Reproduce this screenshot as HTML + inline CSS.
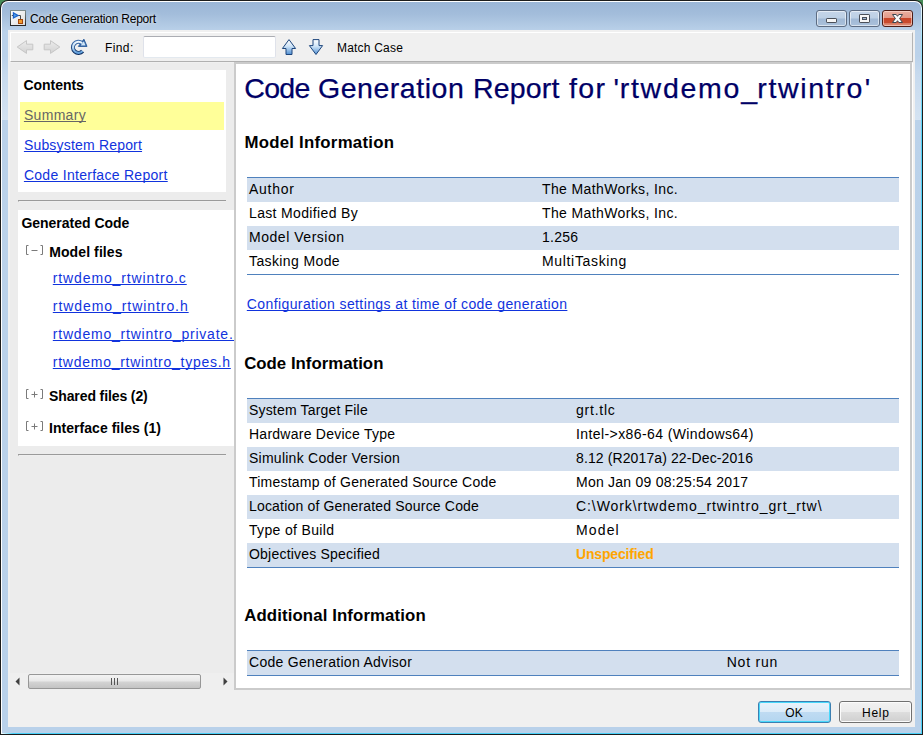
<!DOCTYPE html>
<html>
<head>
<meta charset="utf-8">
<title>Code Generation Report</title>
<style>
*{box-sizing:border-box;margin:0;padding:0}
html,body{width:923px;height:735px;overflow:hidden;background:#468c58}
body{font-family:"Liberation Sans",sans-serif;font-size:14px;color:#000;position:relative}
.abs{position:absolute}
.t{position:absolute;white-space:nowrap;line-height:1;transform-origin:0 0;text-decoration-skip-ink:none}
#frame{left:0;top:0;width:923px;height:735px;background:#1c1c1c;border-radius:8px 8px 0 0;overflow:hidden}
#frame2{left:1px;top:1px;width:921px;height:733px;border-radius:7px 7px 0 0;background:linear-gradient(90deg,#fff 0,#fff 50%,transparent 50%),linear-gradient(#fff 0,#e8f8ff 8px,#9fe2fb 40px,#4fd2f8 140px,#48d0f8 100%)}
#frame2b{left:1px;top:733px;width:921px;height:1px;background:linear-gradient(90deg,#fff 0,#48d0f8 12px,#48d0f8 100%)}
#frame3{left:2px;top:2px;width:919px;height:731px;border-radius:6px 6px 0 0;
 background:linear-gradient(#9bb6d7 0px,#a3bddb 12px,#bbd2ea 30px,#b9d1ea 100%)}
#client{left:8px;top:30px;width:907px;height:697px;background:#f0f0f0}
#toolbar{left:10px;top:32px;width:903px;height:30px;background:#f0f0f0;border-top:1px solid #fff;border-left:1px solid #fff;border-right:1px solid #b4b4b4;border-bottom:1px solid #b0b0b0}
#leftpane{left:10px;top:63px;width:224px;height:627px;background:#ececec;overflow:hidden}
#rightpane{left:234px;top:62px;width:678px;height:628px;background:#fff;border:2px solid #cbcbcb;overflow:hidden}
.wp{position:absolute;background:#fff}
.hr{position:absolute;height:2px;border-top:1px solid #9a9a9a;border-left:1px solid #9a9a9a;border-bottom:1px solid #efefef;left:8px;width:208px}
a,.lnk{color:#0000ee;text-decoration:underline}
.b{font-weight:bold}
.row{position:absolute;left:247px;width:652px;height:24px}
.sh{background:#d3dfee}
.bl{position:absolute;left:247px;width:652px;height:1px;background:#4f81bd}
.wb{top:10px;width:31px;height:17px;border:1px solid #5d6c82;border-radius:3px;box-shadow:inset 0 0 0 1px rgba(255,255,255,.55);background:linear-gradient(#c5d5e8 0,#bdd0e5 47%,#a1b9d5 53%,#aac1db 100%)}
.wc{border-color:#4d1c16;background:linear-gradient(#eab0a2 0,#e39a8a 45%,#c8462a 50%,#c84b2e 78%,#da8068 84%,#dc8a74 100%);box-shadow:inset 0 0 0 1px rgba(255,225,215,.6)}
.btn{position:absolute;width:73px;height:22px;border-radius:3px;top:701px}
</style>
</head>
<body>
<div id="frame" class="abs"></div>
<div id="frame2" class="abs"></div>
<div id="frame2b" class="abs"></div>
<div id="frame3" class="abs"></div>
<div class="abs" style="left:2px;top:56px;width:6px;height:64px;background:linear-gradient(rgba(255,255,255,0) 0,rgba(255,255,255,.18) 30%,rgba(255,255,255,.38) 100%)"></div>
<div class="abs" style="left:915px;top:56px;width:6px;height:64px;background:linear-gradient(rgba(255,255,255,0) 0,rgba(255,255,255,.18) 30%,rgba(255,255,255,.38) 100%)"></div>
<div id="client" class="abs"></div>
<div id="toolbar" class="abs"></div>

<!-- title -->

<!-- toolbar text -->
<div class="abs" id="findbox" style="left:143px;top:36px;width:133px;height:22px;background:#fff;border:1px solid #dfe2ea;border-top-color:#abadb3;border-bottom-color:#e3e9ef;border-radius:2px"></div>

<!-- left pane -->
<div id="leftpane" class="abs">
  <div class="wp" style="left:8px;top:7px;width:208px;height:122px"></div>
  <div class="abs" style="left:10px;top:39px;width:204px;height:28px;background:#ffff99"></div>
  <div class="hr" style="top:137px"></div>
  <div class="wp" style="left:8px;top:147px;width:216px;height:236px"></div>
  <div class="hr" style="top:391px"></div>
</div>

<!-- right pane -->
<div class="abs" style="left:912px;top:63px;width:1px;height:627px;background:#fff"></div>
<div id="rightpane" class="abs"></div>
<div class="bl" style="top:177px"></div>
<div class="row sh" style="top:178px"></div>
<div class="row sh" style="top:226px"></div>
<div class="bl" style="top:274px"></div>
<div class="bl" style="top:398px"></div>
<div class="row sh" style="top:399px"></div>
<div class="row sh" style="top:447px"></div>
<div class="row sh" style="top:495px"></div>
<div class="row sh" style="top:543px"></div>
<div class="bl" style="top:567px"></div>
<div class="bl" style="top:650px"></div>
<div class="row sh" style="top:651px"></div>
<div class="bl" style="top:675px"></div>

<!-- toolbar icons -->
<svg class="abs" style="left:16px;top:39px" width="18" height="16" viewBox="0 0 18 16">
<defs><linearGradient id="gg" x1="0" y1="0" x2="0" y2="1"><stop offset="0" stop-color="#ececec"/><stop offset="1" stop-color="#d2d2d2"/></linearGradient></defs>
<path d="M1.2 8L10.5 1.6V5.2H16.8V10.8H10.5V14.4Z" fill="url(#gg)" stroke="#c6c6c6" stroke-width="1"/></svg>
<svg class="abs" style="left:43px;top:39px" width="18" height="16" viewBox="0 0 18 16">
<path d="M16.8 8L7.5 1.6V5.2H1.2V10.8H7.5V14.4Z" fill="url(#gg)" stroke="#c6c6c6" stroke-width="1"/></svg>
<svg class="abs" style="left:70px;top:38px" width="18" height="18" viewBox="0 0 18 18">
<defs><linearGradient id="rg" x1="0" y1="0" x2="0" y2="1"><stop offset="0" stop-color="#eef7fe"/><stop offset=".5" stop-color="#b9d9f5"/><stop offset="1" stop-color="#5f9edc"/></linearGradient>
<linearGradient id="ro" x1="0" y1="0" x2="0" y2="1"><stop offset="0" stop-color="#3b6cab"/><stop offset="1" stop-color="#0b2c5e"/></linearGradient></defs>
<path d="M12.1 5.1A5.55 5.55 0 1 0 12.6 13.1" fill="none" stroke="url(#ro)" stroke-width="4.1"/>
<path d="M13.9 1.2L17 8.4H8.4Z" fill="#2d5f9f" stroke="#2d5f9f" stroke-width="1" stroke-linejoin="round"/>
<path d="M12.1 5.1A5.55 5.55 0 1 0 12.6 13.1" fill="none" stroke="url(#rg)" stroke-width="2.1"/>
<path d="M13.8 3.2L15.6 7.4H10.6Z" fill="#cfe6f8"/>
</svg>
<svg class="abs" style="left:281px;top:38px" width="16" height="18" viewBox="0 0 16 18">
<defs><linearGradient id="ug" x1="0" y1="0" x2="0" y2="1"><stop offset="0" stop-color="#ffffff"/><stop offset=".45" stop-color="#cfe4f7"/><stop offset="1" stop-color="#4f8fd2"/></linearGradient></defs>
<path d="M8 1.6L14.6 10.5H11V16.5H5V10.5H1.4Z" fill="url(#ug)" stroke="#1c457c" stroke-width="1" stroke-linejoin="miter"/></svg>
<svg class="abs" style="left:308px;top:38px" width="16" height="18" viewBox="0 0 16 18">
<path d="M8 16.5L14.6 7.6H11V1.6H5V7.6H1.4Z" fill="url(#ug)" stroke="#1c457c" stroke-width="1" stroke-linejoin="miter"/></svg>

<!-- window icon -->
<svg class="abs" style="left:10px;top:10px" width="16" height="16" viewBox="0 0 16 16">
<defs><linearGradient id="ig" x1="0" y1="0" x2="1" y2="1"><stop offset="0" stop-color="#ffffff"/><stop offset="1" stop-color="#dcdcdc"/></linearGradient>
<linearGradient id="ib" x1="0" y1="0" x2="0" y2="1"><stop offset="0" stop-color="#7d8b8c"/><stop offset="1" stop-color="#262626"/></linearGradient></defs>
<rect x="0.5" y="0.5" width="15" height="15" fill="url(#ig)" stroke="url(#ib)"/>
<path d="M1.8 5.5H4M8 5.5H10.5V9" fill="none" stroke="#4a4a4a" stroke-width="1"/>
<path d="M2.8 1.8L9.3 5.4L2.8 9Z" fill="#1d62cb"/>
<path d="M4 3.8L6.8 5.4L4 7Z" fill="#4c9ae6"/>
<rect x="8" y="9" width="5" height="5" fill="#a3460a"/>
<rect x="9" y="10" width="3" height="3" fill="#f09a2c"/>
</svg>

<!-- window controls -->
<div class="abs wb" style="left:816px"></div>
<div class="abs wb" style="left:849px"></div>
<div class="abs wb wc" style="left:882px"></div>
<svg class="abs" style="left:825px;top:17px" width="13" height="7" viewBox="0 0 13 7"><rect x="1.5" y="1.5" width="10" height="4" rx="0.6" fill="#f6f6f6" stroke="#4a4f58" stroke-width="1"/></svg>
<svg class="abs" style="left:858px;top:13px" width="13" height="11" viewBox="0 0 13 11"><rect x="1.5" y="1.5" width="10" height="8" rx="0.6" fill="#f6f6f6" stroke="#4a4f58" stroke-width="1"/><rect x="4.5" y="4.5" width="4" height="2" fill="#9fb6d2" stroke="#4a4f58" stroke-width="1"/></svg>
<svg class="abs" style="left:891px;top:13px" width="13" height="11" viewBox="0 0 13 11"><path d="M1.5 1.5H5.2L6.5 3.3L7.8 1.5H11.5L8.6 5.5L11.5 9.5H7.8L6.5 7.7L5.2 9.5H1.5L4.4 5.5Z" fill="#fbfbfb" stroke="#3d4650" stroke-width="1" stroke-linejoin="round"/></svg>

<!-- tree markers -->
<svg class="abs" style="left:25px;top:244px" width="20" height="12" viewBox="0 0 20 12"><path d="M3.5 1.5H1.5V10.5H3.5M15.5 1.5H17.5V10.5H15.5M6.5 6.5H12.5" fill="none" stroke="#7a7a7a" stroke-width="1"/></svg>
<svg class="abs" style="left:25px;top:388px" width="20" height="12" viewBox="0 0 20 12"><path d="M3.5 1.5H1.5V10.5H3.5M15.5 1.5H17.5V10.5H15.5M6.5 6.5H12.5M9.5 3.5V9.5" fill="none" stroke="#7a7a7a" stroke-width="1"/></svg>
<svg class="abs" style="left:25px;top:420px" width="20" height="12" viewBox="0 0 20 12"><path d="M3.5 1.5H1.5V10.5H3.5M15.5 1.5H17.5V10.5H15.5M6.5 6.5H12.5M9.5 3.5V9.5" fill="none" stroke="#7a7a7a" stroke-width="1"/></svg>

<!-- horizontal scrollbar -->
<div class="abs" id="hsb" style="left:10px;top:673px;width:224px;height:17px;background:#efefef"></div>
<div class="abs" id="hthumb" style="left:28px;top:674px;width:173px;height:15px;border:1px solid #979797;border-radius:2px;background:linear-gradient(#f3f3f3 0,#e9e9e9 45%,#d3d3d3 55%,#c4c4c4 100%)"></div>
<svg class="abs" style="left:14px;top:677px" width="8" height="9" viewBox="0 0 8 9"><path d="M5.5 0.5L1.5 4.5L5.5 8.5Z" fill="#404040"/></svg>
<svg class="abs" style="left:221px;top:677px" width="8" height="9" viewBox="0 0 8 9"><path d="M2.5 0.5L6.5 4.5L2.5 8.5Z" fill="#404040"/></svg>
<div class="abs" style="left:111px;top:678px;width:1px;height:7px;background:#555;box-shadow:3px 0 0 #555,6px 0 0 #555"></div>

<!-- buttons -->
<div class="btn" style="left:758px;border:1px solid #3c7fb1;box-shadow:inset 0 0 0 1px #48d8fb;background:linear-gradient(#eaf3fb 0,#dcecf9 48%,#bfdbf2 52%,#b4d6f0 100%)"></div>
<div class="btn" style="left:839px;border:1px solid #707070;box-shadow:inset 0 0 0 1px #fcfcfc;background:linear-gradient(#f2f2f2 0,#ebebeb 48%,#dddddd 52%,#cfcfcf 100%)"></div>
<div class="t" style="left:30.10px;top:12.84px;font-size:12px;letter-spacing:-0.224px;text-shadow:0 0 7px rgba(255,255,255,.75),0 0 3px rgba(255,255,255,.45)">Code Generation Report</div>
<div class="t" style="left:105.00px;top:41.84px;font-size:12px;letter-spacing:0.400px">Find:</div>
<div class="t" style="left:337.00px;top:41.84px;font-size:12px;letter-spacing:0.200px">Match Case</div>
<div class="t" style="left:23.40px;top:78.15px;font-size:14px;letter-spacing:-0.029px;font-weight:bold">Contents</div>
<div class="t" style="left:23.90px;top:108.15px;font-size:14px;letter-spacing:0.317px;color:#666;text-decoration:underline">Summary</div>
<div class="t" style="left:23.90px;top:138.15px;font-size:14px;letter-spacing:0.187px;color:#1133dd;text-decoration:underline">Subsystem Report</div>
<div class="t" style="left:23.90px;top:168.15px;font-size:14px;letter-spacing:0.290px;color:#1133dd;text-decoration:underline">Code Interface Report</div>
<div class="t" style="left:21.40px;top:216.15px;font-size:14px;letter-spacing:-0.015px;font-weight:bold">Generated Code</div>
<div class="t" style="left:49.20px;top:245.15px;font-size:14px;letter-spacing:0.100px;font-weight:bold">Model files</div>
<div class="t" style="left:52.80px;top:271.15px;font-size:14px;letter-spacing:0.871px;color:#1133dd;text-decoration:underline">rtwdemo_rtwintro.c</div>
<div class="t" style="left:52.80px;top:299.15px;font-size:14px;letter-spacing:0.935px;color:#1133dd;text-decoration:underline">rtwdemo_rtwintro.h</div>
<div class="t" style="left:52.80px;top:355.15px;font-size:14px;letter-spacing:0.739px;color:#1133dd;text-decoration:underline">rtwdemo_rtwintro_types.h</div>
<div class="t" style="left:49.00px;top:389.15px;font-size:14px;letter-spacing:-0.107px;font-weight:bold">Shared files (2)</div>
<div class="t" style="left:49.00px;top:421.15px;font-size:14px;letter-spacing:0.039px;font-weight:bold">Interface files (1)</div>
<div class="t" style="left:244.40px;top:134.78px;font-size:16.8px;letter-spacing:0.256px;font-weight:bold">Model Information</div>
<div class="t" style="left:249.00px;top:182.15px;font-size:14px;letter-spacing:0.740px">Author</div>
<div class="t" style="left:249.00px;top:206.15px;font-size:14px;letter-spacing:0.347px">Last Modified By</div>
<div class="t" style="left:249.00px;top:230.15px;font-size:14px;letter-spacing:0.533px">Model Version</div>
<div class="t" style="left:249.00px;top:254.15px;font-size:14px;letter-spacing:0.382px">Tasking Mode</div>
<div class="t" style="left:542.00px;top:182.15px;font-size:14px;letter-spacing:0.378px">The MathWorks, Inc.</div>
<div class="t" style="left:542.00px;top:230.15px;font-size:14px;letter-spacing:0.250px">1.256</div>
<div class="t" style="left:542.00px;top:254.15px;font-size:14px;letter-spacing:0.664px">MultiTasking</div>
<div class="t" style="left:246.80px;top:297.15px;font-size:14px;letter-spacing:0.396px;color:#1133dd;text-decoration:underline">Configuration settings at time of code generation</div>
<div class="t" style="left:244.20px;top:355.78px;font-size:16.8px;letter-spacing:0.020px;font-weight:bold">Code Information</div>
<div class="t" style="left:249.00px;top:403.15px;font-size:14px;letter-spacing:0.176px">System Target File</div>
<div class="t" style="left:249.00px;top:427.15px;font-size:14px;letter-spacing:0.247px">Hardware Device Type</div>
<div class="t" style="left:249.00px;top:451.15px;font-size:14px;letter-spacing:0.248px">Simulink Coder Version</div>
<div class="t" style="left:249.00px;top:475.15px;font-size:14px;letter-spacing:0.221px">Timestamp of Generated Source Code</div>
<div class="t" style="left:249.00px;top:499.15px;font-size:14px;letter-spacing:0.178px">Location of Generated Source Code</div>
<div class="t" style="left:249.00px;top:523.15px;font-size:14px;letter-spacing:0.333px">Type of Build</div>
<div class="t" style="left:576.00px;top:403.15px;font-size:14px;letter-spacing:0.767px">grt.tlc</div>
<div class="t" style="left:576.00px;top:427.15px;font-size:14px;letter-spacing:0.404px">Intel-&gt;x86-64 (Windows64)</div>
<div class="t" style="left:576.00px;top:451.15px;font-size:14px;letter-spacing:0.113px">8.12 (R2017a) 22-Dec-2016</div>
<div class="t" style="left:576.00px;top:475.15px;font-size:14px;letter-spacing:0.239px">Mon Jan 09 08:25:54 2017</div>
<div class="t" style="left:576.00px;top:499.15px;font-size:14px;letter-spacing:0.922px">C:\Work\rtwdemo_rtwintro_grt_rtw\</div>
<div class="t" style="left:576.00px;top:523.15px;font-size:14px;letter-spacing:1.150px">Model</div>
<div class="t" style="left:576.00px;top:547.15px;font-size:14px;letter-spacing:-0.160px;font-weight:bold;color:#ffa500">Unspecified</div>
<div class="t" style="left:244.20px;top:607.78px;font-size:16.8px;letter-spacing:0.119px;font-weight:bold">Additional Information</div>
<div class="t" style="left:249.00px;top:655.15px;font-size:14px;letter-spacing:0.291px">Code Generation Advisor</div>
<div class="t" style="left:726.70px;top:655.15px;font-size:14px;letter-spacing:0.783px">Not run</div>
<div class="t" style="left:785.30px;top:706.84px;font-size:12px;letter-spacing:0.200px">OK</div>
<div class="t" style="left:862.00px;top:706.84px;font-size:12px;letter-spacing:0.767px">Help</div>
<div class="t" style="left:249.00px;top:547.15px;font-size:14px;letter-spacing:0.211px">Objectives Specified</div>
<div class="t" style="left:542.00px;top:206.15px;font-size:14px;letter-spacing:0.378px">The MathWorks, Inc.</div>
<div class="abs" style="left:0;top:325.15px;width:233.5px;height:20px;overflow:hidden"><div class="t" style="left:52.80px;top:327.15px;font-size:14px;letter-spacing:0.790px;color:#1133dd;text-decoration:underline;top:2px">rtwdemo_rtwintro_private.h</div></div>
<div class="t" style="left:244.20px;top:74.47px;font-size:28.5px;letter-spacing:-0.633px;color:#000066;-webkit-text-stroke:0.25px #000066">Code</div>
<div class="t" style="left:318.00px;top:74.47px;font-size:28.5px;letter-spacing:0.533px;color:#000066;-webkit-text-stroke:0.25px #000066">Generation</div>
<div class="t" style="left:473.10px;top:74.47px;font-size:28.5px;letter-spacing:0.140px;color:#000066;-webkit-text-stroke:0.25px #000066">Report</div>
<div class="t" style="left:568.90px;top:74.47px;font-size:28.5px;letter-spacing:1.400px;color:#000066;-webkit-text-stroke:0.25px #000066">for</div>
<div class="t" style="left:613.60px;top:74.47px;font-size:28.5px;letter-spacing:0.500px;color:#000066;-webkit-text-stroke:0.25px #000066">&#x27;</div>
<div class="t" style="left:619.80px;top:74.47px;font-size:28.5px;letter-spacing:1.700px;color:#000066;-webkit-text-stroke:0.25px #000066">rtwdemo</div>
<div class="t" style="left:741.20px;top:74.47px;font-size:28.5px;letter-spacing:-1.000px;color:#000066;-webkit-text-stroke:0.25px #000066">_</div>
<div class="t" style="left:757.30px;top:74.47px;font-size:28.5px;letter-spacing:1.657px;color:#000066;-webkit-text-stroke:0.25px #000066">rtwintro</div>
<div class="t" style="left:864.80px;top:74.47px;font-size:28.5px;letter-spacing:0.600px;color:#000066;-webkit-text-stroke:0.25px #000066">&#x27;</div>
</body>
</html>
